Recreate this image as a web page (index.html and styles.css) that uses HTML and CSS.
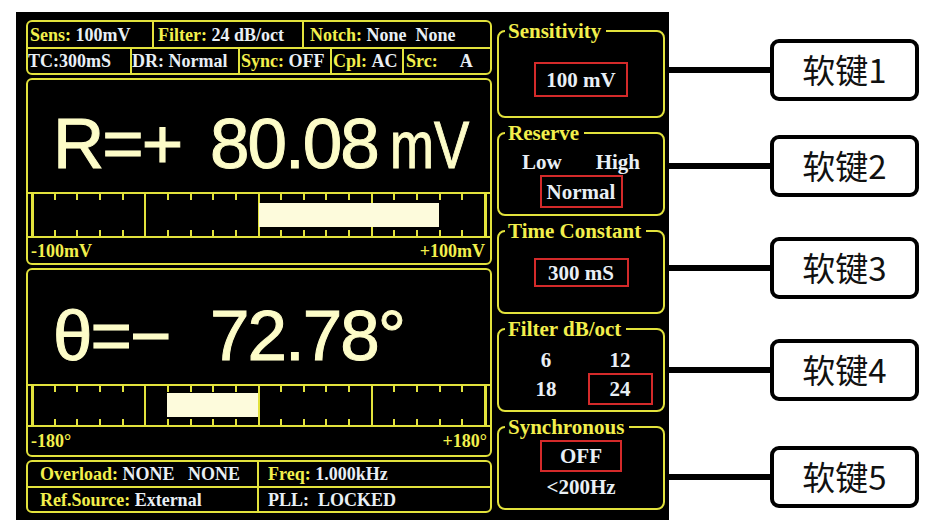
FILE: index.html
```html
<!DOCTYPE html>
<html lang="zh">
<head>
<meta charset="utf-8">
<title>Lock-in amplifier display</title>
<link rel="stylesheet" href="styles.css">
</head>
<body>
<div class="stage">
  <div class="screen">
    <div class="left">
      <div class="info">
        <div class="irow r1">
          <div class="cell w124 p2"><span class="lb">Sens:</span>&nbsp;<span class="vl">100mV</span></div>
          <div class="cell w150 p4"><span class="lb">Filter:</span>&nbsp;<span class="vl">24 dB/oct</span></div>
          <div class="cell grow p6"><span class="lb">Notch:</span>&nbsp;<span class="vl">None&nbsp;&nbsp;None</span></div>
        </div>
        <div class="irow r2">
          <div class="cell w102 p0"><span class="vl">TC:300mS</span></div>
          <div class="cell w108 p0"><span class="vl">DR: Normal</span></div>
          <div class="cell w92 p1"><span class="lb">Sync:</span>&nbsp;<span class="vl">OFF</span></div>
          <div class="cell w72 p1"><span class="lb">Cpl:</span>&nbsp;<span class="vl">AC</span></div>
          <div class="cell grow p2"><span class="lb">Src:</span><span class="vl src-a">A</span></div>
        </div>
      </div>

      <div class="meter m-r">
        <div class="readout r-top"><span class="sym">R=+</span><span class="num">80.08</span><span class="unit">mV</span></div>
        <svg class="scale" width="462" height="46" viewBox="0 0 462 46">
          <path d="M27 0v8M49 0v8M72 0v8M95 0v8M140 0v8M163 0v8M185 0v8M208 0v8M253 0v8M276 0v8M298 0v8M321 0v8M366 0v8M389 0v8M412 0v8M434 0v8M27 38v8M49 38v8M72 38v8M95 38v8M140 38v8M163 38v8M185 38v8M208 38v8M253 38v8M276 38v8M298 38v8M321 38v8M366 38v8M389 38v8M412 38v8M434 38v8M117 0v46M231 0v46M344 0v46" stroke="#e2e23c" stroke-width="2" fill="none"/>
          <rect x="0" y="0" width="462" height="2" fill="#e2e23c"/>
          <rect x="0" y="44" width="462" height="2" fill="#e2e23c"/>
          <rect x="3" y="0" width="3" height="46" fill="#e2e23c"/>
          <rect x="456" y="0" width="3" height="46" fill="#e2e23c"/>
          <rect x="231" y="11" width="180" height="24" fill="#fdfbdc"/>
        </svg>
        <div class="scl s-r"><span>-100mV</span><span>+100mV</span></div>
      </div>

      <div class="meter m-t">
        <div class="readout t-top"><span class="sym">θ=−</span><span class="num">72.78°</span></div>
        <svg class="scale" width="462" height="43" viewBox="0 0 462 43">
          <path d="M27 0v8M49 0v8M72 0v8M95 0v8M140 0v8M163 0v8M185 0v8M208 0v8M253 0v8M276 0v8M298 0v8M321 0v8M366 0v8M389 0v8M412 0v8M434 0v8M27 35v8M49 35v8M72 35v8M95 35v8M140 35v8M163 35v8M185 35v8M208 35v8M253 35v8M276 35v8M298 35v8M321 35v8M366 35v8M389 35v8M412 35v8M434 35v8M117 0v43M231 0v43M344 0v43" stroke="#e2e23c" stroke-width="2" fill="none"/>
          <rect x="0" y="0" width="462" height="2" fill="#e2e23c"/>
          <rect x="0" y="41" width="462" height="2" fill="#e2e23c"/>
          <rect x="3" y="0" width="3" height="43" fill="#e2e23c"/>
          <rect x="456" y="0" width="3" height="43" fill="#e2e23c"/>
          <rect x="139" y="9" width="91" height="24" fill="#fdfbdc"/>
        </svg>
        <div class="scl s-t"><span>-180°</span><span>+180°</span></div>
      </div>

      <div class="foot">
        <div class="frow f1">
          <div class="fcell fc1"><span class="lb">Overload:</span>&nbsp;<span class="vl">NONE&nbsp;&nbsp;&nbsp;NONE</span></div>
          <div class="fcell fc2"><span class="lb">Freq:</span>&nbsp;<span class="vl">1.000kHz</span></div>
        </div>
        <div class="frow f2">
          <div class="fcell fc1"><span class="lb">Ref.Source:</span>&nbsp;<span class="vl">External</span></div>
          <div class="fcell fc2"><span class="vl">PLL:&nbsp;&nbsp;LOCKED</span></div>
        </div>
      </div>
    </div>

    <div class="right">
      <div class="panel p-sens">
        <div class="ptitle">Sensitivity</div>
        <div class="sel sens-sel">100 mV</div>
      </div>
      <div class="panel p-res">
        <div class="ptitle">Reserve</div>
        <div class="lohi"><span>Low</span><span>High</span></div>
        <div class="sel res-sel">Normal</div>
      </div>
      <div class="panel p-tc">
        <div class="ptitle">Time Constant</div>
        <div class="sel tc-sel">300 mS</div>
      </div>
      <div class="panel p-filt">
        <div class="ptitle">Filter dB/oct</div>
        <div class="fgrid">
          <span>6</span><span>12</span>
          <span>18</span><span class="sel f-sel">24</span>
        </div>
      </div>
      <div class="panel p-sync">
        <div class="ptitle">Synchronous</div>
        <div class="sel sync-sel">OFF</div>
        <div class="sub">&lt;200Hz</div>
      </div>
    </div>
  </div>

  <div class="keys">
    <div class="key k1"><div class="wire"></div><div class="kbox">软键1</div></div>
    <div class="key k2"><div class="wire"></div><div class="kbox">软键2</div></div>
    <div class="key k3"><div class="wire"></div><div class="kbox">软键3</div></div>
    <div class="key k4"><div class="wire"></div><div class="kbox">软键4</div></div>
    <div class="key k5"><div class="wire"></div><div class="kbox">软键5</div></div>
  </div>
</div>
</body>
</html>
```

FILE: styles.css
```css
html, body {
  margin: 0;
  padding: 0;
  background: #ffffff;
}

body {
  width: 938px;
  height: 530px;
  overflow: hidden;
}

.stage {
  display: flex;
  padding: 12px 0 0 16px;
}

/* ---------- instrument screen ---------- */
.screen {
  width: 653px;
  height: 508px;
  box-sizing: border-box;
  background: #000;
  padding: 8px 4px 0 10px;
  display: flex;
  gap: 5px;
  font-family: "Liberation Serif", "Times New Roman", serif;
  font-weight: bold;
}

.lb { color: #f2ef4c; }
.vl { color: #e9eff5; }

.left {
  width: 466px;
  display: flex;
  flex-direction: column;
  gap: 3px;
}

/* info box */
.info {
  height: 55px;
  box-sizing: border-box;
  border: 2px solid #e2e23c;
  border-radius: 6px;
  display: flex;
  flex-direction: column;
  font-size: 18px;
}

.irow { display: flex; }
.irow.r1 { height: 25px; border-bottom: 2px solid #e2e23c; }
.irow.r2 { height: 24px; }

.cell {
  box-sizing: border-box;
  border-left: 2px solid #e2e23c;
  display: flex;
  align-items: center;
  white-space: nowrap;
  line-height: 22px;
  overflow: hidden;
}
.cell:first-child { border-left: 0; }
.cell.grow { flex: 1; }
.w124 { width: 124px; }
.w150 { width: 150px; }
.w102 { width: 102px; }
.w108 { width: 108px; }
.w92 { width: 92px; }
.w72 { width: 72px; }
.p0 { padding-left: 0; }
.p1 { padding-left: 1px; }
.p2 { padding-left: 2px; }
.p4 { padding-left: 4px; }
.p6 { padding-left: 6px; }
.src-a { margin-left: 22px; }

/* meters */
.meter {
  box-sizing: border-box;
  border: 2px solid #e2e23c;
  border-radius: 6px;
  display: flex;
  flex-direction: column;
}
.m-r { height: 187px; }
.m-t { height: 189px; }

.readout {
  box-sizing: border-box;
  font-family: "Liberation Sans", Arial, sans-serif;
  font-weight: normal;
  font-size: 71px;
  line-height: 72px;
  color: #fdfcc8;
  -webkit-text-stroke: 1px #fdfcc8;
  display: flex;
  align-items: baseline;
  white-space: pre;
  padding-left: 25px;
}
.r-top { height: 112px; padding-top: 28px; }
.t-top { height: 114px; padding-top: 30px; }

.sym {
  width: 157px;
  letter-spacing: -2px;
}
.num { letter-spacing: -2px; }
.unit {
  display: inline-block;
  margin-left: 12px;
  font-size: 66px;
  transform: scaleX(0.8);
  transform-origin: left bottom;
}

.scale { display: block; }

.scl {
  display: flex;
  justify-content: space-between;
  font-size: 18px;
  line-height: 20px;
  color: #f2ef4c;
  padding: 0 5px 0 3px;
}
.s-r { margin-top: 3px; }
.s-t { margin-top: 4px; padding-right: 3px; }

/* footer box */
.foot {
  height: 53px;
  box-sizing: border-box;
  border: 2px solid #e2e23c;
  border-radius: 6px;
  display: flex;
  flex-direction: column;
  font-size: 18px;
}
.frow { display: flex; }
.f1 { height: 24px; border-bottom: 2px solid #e2e23c; }
.f2 { height: 23px; }
.fcell {
  box-sizing: border-box;
  display: flex;
  align-items: center;
  white-space: nowrap;
  line-height: 20px;
}
.fc1 { width: 229px; padding-left: 12px; }
.fc2 { flex: 1; padding-left: 9px; border-left: 2px solid #e2e23c; }

/* right-hand soft-key panels */
.right {
  width: 168px;
  display: flex;
  flex-direction: column;
  gap: 14px;
  padding-top: 10px;
  font-size: 21px;
  color: #e9eff5;
}

.panel {
  box-sizing: border-box;
  border: 2px solid #e2e23c;
  border-radius: 8px;
  display: flex;
  flex-direction: column;
  align-items: center;
}
.p-sens { height: 88px; }
.p-res, .p-tc, .p-filt, .p-sync { height: 84px; }

.ptitle {
  align-self: flex-start;
  margin: -12px 0 0 6px;
  padding: 0 5px 0 3px;
  background: #000;
  color: #f2ef4c;
  line-height: 22px;
  height: 22px;
  white-space: nowrap;
}

.sel {
  box-sizing: border-box;
  border: 2px solid #d42a2a;
  display: flex;
  align-items: center;
  justify-content: center;
  line-height: 22px;
}
.sens-sel { width: 94px; height: 35px; margin-top: 20px; }
.res-sel { width: 83px; height: 33px; margin-top: 2px; }
.tc-sel { width: 95px; height: 29px; margin-top: 16px; }
.sync-sel { width: 82px; height: 32px; margin-top: 2px; }

.lohi {
  align-self: stretch;
  display: flex;
  justify-content: space-between;
  padding: 0 23px;
  margin-top: 7px;
  line-height: 22px;
}

.fgrid {
  align-self: flex-start;
  margin: 9px 0 0 10px;
  display: grid;
  grid-template-columns: 74px 74px;
  grid-template-rows: 22px 32px;
  row-gap: 2px;
  justify-items: center;
  align-items: center;
  line-height: 22px;
}
.f-sel { width: 65px; height: 32px; }

.sub {
  margin-top: 4px;
  line-height: 22px;
}

/* ---------- callout keys ---------- */
.keys {
  display: flex;
  flex-direction: column;
  padding-top: 27px;
}
.key {
  display: flex;
  align-items: center;
  height: 62px;
}
.k2 { margin-top: 34px; }
.k3 { margin-top: 40px; }
.k4 { margin-top: 40px; }
.k5 { margin-top: 45px; }

.wire {
  width: 101px;
  height: 6px;
  background: #000;
}
.kbox {
  box-sizing: border-box;
  width: 149px;
  height: 62px;
  border: 4px solid #000;
  border-radius: 9px;
  display: flex;
  align-items: center;
  justify-content: center;
  font-family: "Noto Sans CJK SC", "Noto Sans", sans-serif;
  font-size: 33px;
  color: #111;
  padding-bottom: 2px;
}
```
